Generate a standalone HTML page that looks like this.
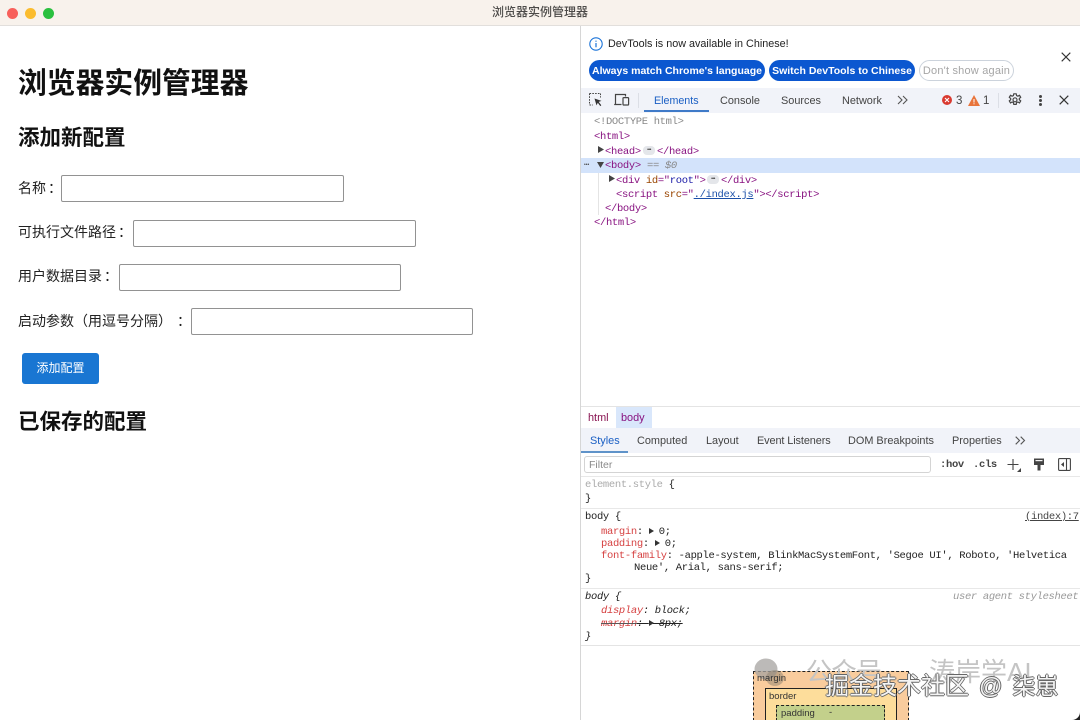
<!DOCTYPE html>
<html lang="zh"><head><meta charset="utf-8"><title>浏览器实例管理器</title>
<style>
html,body{margin:0;padding:0;width:1080px;height:720px;overflow:hidden;background:#fff}
body{position:relative;font-family:"Liberation Sans","Noto Sans CJK SC",sans-serif;color:#222;text-spacing-trim:space-all}
.a{position:absolute;white-space:nowrap}
.r{position:absolute}
.m{font-family:"Liberation Mono","Noto Sans CJK SC",monospace;font-size:10.500px;line-height:14px;color:#222;letter-spacing:-.33px}
.t{font-size:10.900px;line-height:14px;color:#444}
.tag{color:#881280}.at{color:#994500}.val{color:#1a1aa6}.gr{color:#888}
.p{color:#c80000;opacity:.75}
.lab{font-size:14px;line-height:20px;color:#222}
.c{position:relative;left:2px}
.inp{position:absolute;box-sizing:border-box;width:283px;height:27px;border:1px solid #929292;border-radius:2px;background:#fff}
.pill{position:absolute;top:60px;height:21px;border-radius:11px;background:#0b57d0;color:#fff;font-size:10.500px;font-weight:bold;line-height:22px;text-align:center;white-space:nowrap}
.tri{display:inline-block;width:0;height:0;border-left:5px solid #333;border-top:3px solid transparent;border-bottom:3px solid transparent;margin-right:-1px;vertical-align:0}
.dots{position:absolute;width:12px;height:9px;border-radius:4px;background:#e4e6ea;color:#444;font-size:5px;line-height:9px;text-align:center;letter-spacing:-.5px}
svg{position:absolute;overflow:visible}
</style></head><body>

<!-- title bar -->
<div class="r" style="left:0;top:0;width:1080px;height:25px;background:#f8f2ec;border-bottom:1px solid #e2dfdc"></div>
<div class="r" style="left:7px;top:7.500px;width:11px;height:11px;border-radius:50%;background:#f8605b"></div>
<div class="r" style="left:25px;top:7.500px;width:11px;height:11px;border-radius:50%;background:#fbbc2e"></div>
<div class="r" style="left:43px;top:7.500px;width:11px;height:11px;border-radius:50%;background:#2ac03f"></div>
<div class="a" style="left:492px;top:5px;font-size:12px;line-height:15px;color:#4c4a48;font-weight:500">浏览器实例管理器</div>

<!-- page -->
<div class="a" style="left:18px;top:66px;font-size:28.800px;line-height:36px;font-weight:bold;color:#111">浏览器实例管理器</div>
<div class="a" style="left:18px;top:124px;font-size:21.500px;line-height:28px;font-weight:bold;color:#111">添加新配置</div>
<div class="a lab" style="left:18px;top:178px">名称<span class="c">：</span></div>
<div class="inp" style="left:61px;top:175px"></div>
<div class="a lab" style="left:18px;top:222px">可执行文件路径<span class="c">：</span></div>
<div class="inp" style="left:133px;top:219.500px"></div>
<div class="a lab" style="left:18px;top:266px">用户数据目录<span class="c">：</span></div>
<div class="inp" style="left:119px;top:264px;width:282px"></div>
<div class="a lab" style="left:18px;top:311px">启动参数（用逗号分隔）<span class="c" style="left:5px">：</span></div>
<div class="inp" style="left:191px;top:308px;width:282px"></div>
<div class="a" style="left:22px;top:353px;width:77px;height:31px;background:#1976d2;border-radius:3px;color:#fff;font-size:12px;line-height:31px;text-align:center">添加配置</div>
<div class="a" style="left:18px;top:408px;font-size:21.500px;line-height:28px;font-weight:bold;color:#111">已保存的配置</div>

<!-- devtools frame -->
<div class="r" style="left:580px;top:26px;width:1px;height:694px;background:#d6d6d6"></div>

<!-- infobar -->
<svg style="left:589px;top:37px" width="14" height="14" viewBox="0 0 14 14"><circle cx="7" cy="7" r="6.200" fill="none" stroke="#1a73d8" stroke-width="1.100"/><path d="M7 6v4.200M7 3.600v1.200" stroke="#1a73d8" stroke-width="1.200" fill="none"/></svg>
<div class="a" style="left:608px;top:37px;font-size:10.800px;line-height:14px;color:#222">DevTools is now available in Chinese!</div>
<div class="pill" style="left:589px;width:176px">Always match Chrome's language</div>
<div class="pill" style="left:769px;width:146px">Switch DevTools to Chinese</div>
<div class="pill" style="left:919px;width:93px;background:#fff;border:1px solid #ccd3dc;height:19px;line-height:20px;color:#a5a5a5;font-size:11px;font-weight:normal;letter-spacing:.2px">Don't show again</div>
<svg style="left:1061px;top:52px" width="10" height="10" viewBox="0 0 10 10"><path d="M.7.7l8.600 8.600M9.300.7L.7 9.300" stroke="#333" stroke-width="1.100" fill="none"/></svg>

<!-- main toolbar -->
<div class="r" style="left:581px;top:88px;width:499px;height:25px;background:#f1f3f9"></div>
<svg style="left:589px;top:93px" width="14" height="14" viewBox="0 0 14 14"><path d="M.5.5h11M.5.500v11.500M.5 12h3.500M11.500.5v4" stroke="#444" stroke-width="1" stroke-dasharray="1.600 1.200" fill="none"/><path d="M5.500 5.500l7 2.400-2.800 1 2.600 3.300-1 .9-2.500-3.300-1.300 2.600z" fill="#333"/></svg>
<svg style="left:614px;top:93px" width="16" height="14" viewBox="0 0 16 14"><path d="M1.500 11.500V1.500h10v2M.2 11.500h7.300" stroke="#444" stroke-width="1.200" fill="none"/><rect x="9" y="4.600" width="5.600" height="7.400" rx=".8" stroke="#444" stroke-width="1.200" fill="none"/></svg>
<div class="r" style="left:638px;top:93px;width:1px;height:15px;background:#dcdfe6"></div>
<div class="a t" style="left:654px;top:94px;color:#1a5fc4;font-size:10.700px">Elements</div>
<div class="r" style="left:644px;top:110px;width:65px;height:2px;background:#3f7ac8"></div>
<div class="a t" style="left:720px;top:94px">Console</div>
<div class="a t" style="left:781px;top:94px">Sources</div>
<div class="a t" style="left:842px;top:94px">Network</div>
<svg style="left:897px;top:95px" width="12" height="10" viewBox="0 0 12 10"><path d="M1 1l4 4-4 4M6 1l4 4-4 4" stroke="#555" stroke-width="1.100" fill="none"/></svg>
<div class="r" style="left:942px;top:95px;width:10px;height:10px;border-radius:50%;background:#d93a30"></div>
<svg style="left:942px;top:95px" width="10" height="10" viewBox="0 0 10 10"><path d="M3 3l4 4M7 3L3 7" stroke="#fff" stroke-width="1.100" fill="none"/></svg>
<div class="a t" style="left:956px;top:94px;font-size:11.500px">3</div>
<svg style="left:968px;top:94.500px" width="12" height="11" viewBox="0 0 12 11"><path d="M6 0L12 11H0z" fill="#e8743b"/><path d="M6 4v3.500M6 8.300v1" stroke="#fff" stroke-width="1"/></svg>
<div class="a t" style="left:983px;top:94px;font-size:11.500px">1</div>
<div class="r" style="left:998px;top:93px;width:1px;height:15px;background:#dcdfe6"></div>
<svg style="left:1008px;top:93px" width="14" height="14" viewBox="0 0 14 14"><path d="M5.800.8h2.400l.4 1.800 1.300.6 1.600-.9 1.200 2-1.400 1.200v1.200l1.400 1.200-1.200 2-1.600-.9-1.300.6-.4 1.800H5.800l-.4-1.800-1.300-.6-1.600.9-1.200-2 1.400-1.200V5.500L1.300 4.300l1.200-2 1.600.9 1.300-.6z" fill="none" stroke="#444" stroke-width="1.200"/><circle cx="7" cy="6.800" r="2" fill="none" stroke="#444" stroke-width="1.200"/></svg>
<div class="r" style="left:1039px;top:95px;width:3px;height:3px;border-radius:50%;background:#444"></div>
<div class="r" style="left:1039px;top:99px;width:3px;height:3px;border-radius:50%;background:#444"></div>
<div class="r" style="left:1039px;top:103px;width:3px;height:3px;border-radius:50%;background:#444"></div>
<svg style="left:1059px;top:95px" width="10" height="10" viewBox="0 0 10 10"><path d="M.7.7l8.600 8.600M9.300.7L.7 9.300" stroke="#333" stroke-width="1.200" fill="none"/></svg>

<!-- dom tree -->
<div class="r" style="left:581px;top:158px;width:499px;height:15px;background:#d3e3fb"></div>
<div class="r" style="left:598px;top:173px;width:1px;height:42px;background:#e4e4e4"></div>
<div class="a m gr" style="left:594px;top:115px">&lt;!DOCTYPE html&gt;</div>
<div class="a m tag" style="left:594px;top:130px">&lt;html&gt;</div>
<svg style="left:598px;top:146px" width="6" height="7" viewBox="0 0 6 7"><path d="M0 0l6 3.500-6 3.500z" fill="#444"/></svg>
<div class="a m tag" style="left:605px;top:145px">&lt;head&gt;</div>
<div class="dots" style="left:643px;top:146px">•••</div>
<div class="a m tag" style="left:657px;top:145px">&lt;/head&gt;</div>
<div class="a" style="left:584px;top:160px;font-size:5px;line-height:10px;color:#444">•••</div>
<svg style="left:597px;top:162px" width="7" height="6" viewBox="0 0 7 6"><path d="M0 0h7L3.500 6z" fill="#444"/></svg>
<div class="a m tag" style="left:605px;top:159px">&lt;body&gt;</div>
<div class="a m gr" style="left:647px;top:159px">== <i>$0</i></div>
<svg style="left:609px;top:175px" width="6" height="7" viewBox="0 0 6 7"><path d="M0 0l6 3.500-6 3.500z" fill="#444"/></svg>
<div class="a m tag" style="left:616px;top:174px">&lt;div <span class="at">id</span>="<span class="val">root</span>"&gt;</div>
<div class="dots" style="left:707px;top:175px">•••</div>
<div class="a m tag" style="left:721px;top:174px">&lt;/div&gt;</div>
<div class="a m tag" style="left:616px;top:188px">&lt;script <span class="at">src</span>="<span style="color:#1a4fa8;text-decoration:underline">./index.js</span>"&gt;&lt;/script&gt;</div>
<div class="a m tag" style="left:605px;top:202px">&lt;/body&gt;</div>
<div class="a m tag" style="left:594px;top:216px">&lt;/html&gt;</div>

<!-- breadcrumb -->
<div class="r" style="left:581px;top:406px;width:499px;height:1px;background:#e4e4e4"></div>
<div class="r" style="left:616px;top:407px;width:36px;height:21px;background:#d9e7fb"></div>
<div class="a t" style="left:588px;top:411px;color:#881250">html</div>
<div class="a t" style="left:621px;top:411px;color:#881280">body</div>

<!-- sidebar tabs -->
<div class="r" style="left:581px;top:428px;width:499px;height:25px;background:#f1f3f9"></div>
<div class="a t" style="left:590px;top:434px;color:#1a5fc4">Styles</div>
<div class="r" style="left:581px;top:451px;width:47px;height:2px;background:#5f93c9"></div>
<div class="a t" style="left:637px;top:434px">Computed</div>
<div class="a t" style="left:706px;top:434px">Layout</div>
<div class="a t" style="left:757px;top:434px;letter-spacing:-.1px">Event Listeners</div>
<div class="a t" style="left:848px;top:434px">DOM Breakpoints</div>
<div class="a t" style="left:952px;top:434px">Properties</div>
<svg style="left:1015px;top:436px" width="11" height="9" viewBox="0 0 11 9"><path d="M.7.7L4.500 4.500.7 8.300M5.700.7l3.800 3.800-3.800 3.800" stroke="#555" stroke-width="1.100" fill="none"/></svg>

<!-- filter -->
<div class="r" style="left:584px;top:456px;width:345px;height:15px;border:1px solid #d4d4d4;border-radius:3px;background:#fff"></div>
<div class="a" style="left:589px;top:458px;font-size:10.500px;line-height:14px;color:#8a8a8a">Filter</div>
<div class="a m" style="left:940px;top:458px;font-weight:bold;color:#444">:hov</div>
<div class="a m" style="left:973px;top:458px;font-weight:bold;color:#444">.cls</div>
<svg style="left:1007px;top:458px" width="15" height="14" viewBox="0 0 15 14"><path d="M6 1v11M.5 6.500h11" stroke="#444" stroke-width="1.100" fill="none"/><path d="M14 10v4h-4z" fill="#444"/></svg>
<svg style="left:1033px;top:458px" width="12" height="13" viewBox="0 0 12 13"><path d="M1 .5h10v6.500H7.500v5.500h-3V7H1z" fill="#444"/><path d="M2.500 2h7v1.200h-7z" fill="#f4f4f4"/></svg>
<svg style="left:1058px;top:458px" width="13" height="13" viewBox="0 0 13 13"><rect x=".6" y=".6" width="11.800" height="11.800" rx="1" fill="none" stroke="#444" stroke-width="1.100"/><path d="M8.500.6v11.800" stroke="#444" stroke-width="1.100"/><path d="M6 4v5L3 6.500z" fill="#444"/></svg>
<div class="r" style="left:581px;top:476px;width:499px;height:1px;background:#e8e8e8"></div>

<!-- styles -->
<div class="a m" style="left:585px;top:478px"><span style="color:#aaa">element.style</span> {</div>
<div class="a m" style="left:585px;top:492px">}</div>
<div class="r" style="left:581px;top:508px;width:499px;height:1px;background:#e8e8e8"></div>
<div class="a m" style="left:585px;top:510px">body {</div>
<div class="a m" style="left:1025px;top:510px;color:#444;text-decoration:underline">(index):7</div>
<div class="a m" style="left:601px;top:525px"><span class="p">margin</span>: <span class="tri"></span> 0;</div>
<div class="a m" style="left:601px;top:537px"><span class="p">padding</span>: <span class="tri"></span> 0;</div>
<div class="a m" style="left:601px;top:549px"><span class="p">font-family</span>: -apple-system, BlinkMacSystemFont, 'Segoe UI', Roboto, 'Helvetica</div>
<div class="a m" style="left:634px;top:561px">Neue', Arial, sans-serif;</div>
<div class="a m" style="left:585px;top:572px">}</div>
<div class="r" style="left:581px;top:588px;width:499px;height:1px;background:#e8e8e8"></div>
<div class="a m" style="left:585px;top:590px;font-style:italic">body {</div>
<div class="a m" style="left:953px;top:590px;font-style:italic;color:#999">user agent stylesheet</div>
<div class="a m" style="left:601px;top:604px;font-style:italic"><span class="p">display</span>: block;</div>
<div class="a m" style="left:601px;top:617px;font-style:italic;text-decoration:line-through"><span class="p">margin</span>: <span class="tri"></span> 8px;</div>
<div class="a m" style="left:585px;top:630px;font-style:italic">}</div>
<div class="r" style="left:581px;top:645px;width:499px;height:1px;background:#e4e4e4"></div>

<!-- box model -->
<div class="r" style="left:753px;top:671px;width:154px;height:49px;background:#f9cc9d;border:1px dashed #222;border-bottom:0"></div>
<div class="r" style="left:765px;top:688px;width:130px;height:32px;background:#fddd9b;border:1px solid #222;border-bottom:0"></div>
<div class="r" style="left:776px;top:705px;width:107px;height:15px;background:#c3d08b;border:1px dashed #222;border-bottom:0"></div>

<!-- faint watermark -->
<svg style="left:754px;top:658px" width="30" height="30" viewBox="0 0 30 30"><ellipse cx="12" cy="11" rx="11.500" ry="10.500" fill="#a5a3a0" opacity=".75"/><ellipse cx="21" cy="20" rx="9" ry="8" fill="#8f8270" opacity=".5"/></svg>
<div class="a" style="left:806px;top:656px;font-size:26px;line-height:32px;color:#c4c4c4;letter-spacing:-1px">公众号</div>
<div class="a" style="left:929px;top:656px;font-size:26px;line-height:32px;color:#c4c4c4">涛岸学AI</div>

<div class="a" style="left:757px;top:673px;font-size:9.500px;line-height:12px;color:#333">margin</div>
<div class="a" style="left:769px;top:691px;font-size:9.500px;line-height:12px;color:#333">border</div>
<div class="a" style="left:781px;top:708px;font-size:9.500px;line-height:12px;color:#333">padding</div>
<div class="a" style="left:829px;top:707px;font-size:9.500px;line-height:12px;color:#333">-</div>

<!-- main watermark -->
<div class="a" style="left:825px;top:671px;font-size:24px;line-height:30px;color:#f4f4f4;text-shadow:1px 0 #666,-1px 0 #666,0 1px #666,0 -1px #666">掘金技术社区<span style="margin-left:10px;font-size:23px">@</span><span style="margin-left:10px;font-size:23px">柒崽</span></div>

<!-- corner -->
<svg style="left:1072px;top:712px" width="8" height="8" viewBox="0 0 8 8"><path d="M8 0v8H0a8 8 0 0 0 8-8z" fill="#222"/></svg>
</body></html>
